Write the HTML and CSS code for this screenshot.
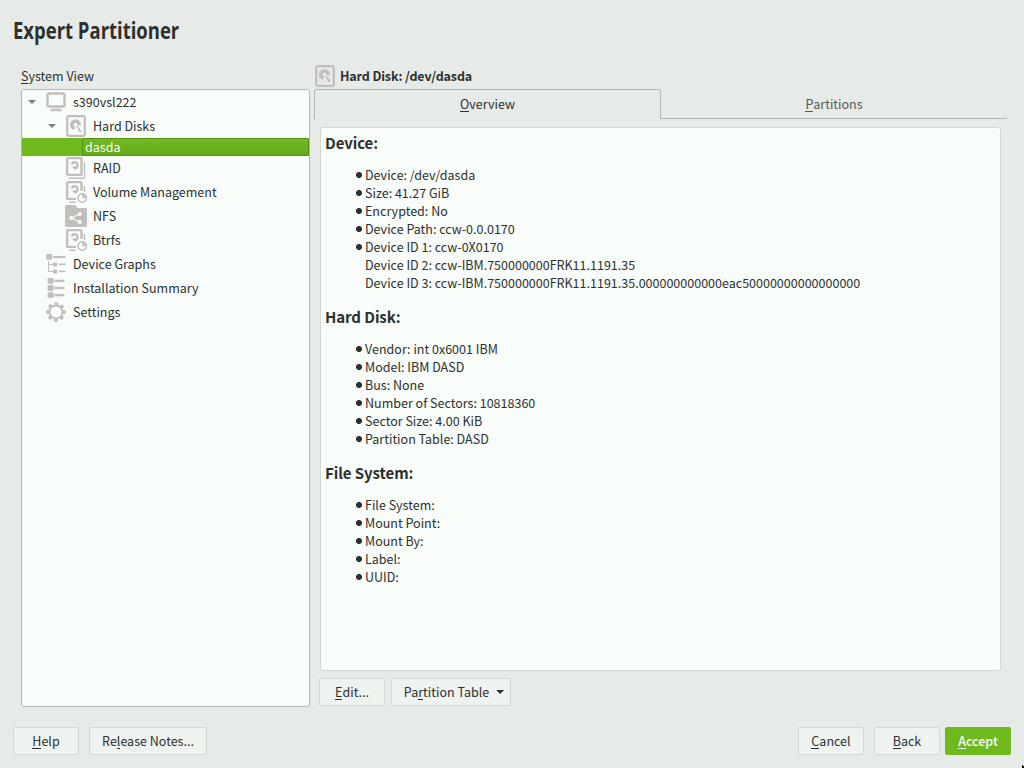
FILE: index.html
```html
<!DOCTYPE html>
<html lang="en">
<head>
<meta charset="utf-8">
<title>Expert Partitioner</title>
<link rel="stylesheet" href="styles.css">
</head>
<body>
<svg class="defs" width="0" height="0">
  <symbol id="disk" viewBox="0 0 22 22">
    <rect x="2.200" y="1.200" width="17.600" height="19.600" rx="1.600" fill="none" stroke="currentColor" stroke-width="2.200"/>
    <path d="M9.700 13.300A3.700 3.700 0 1 1 14.100 10.300" fill="none" stroke="currentColor" stroke-width="3.600"/>
    <path d="M11.500 10.500L13.500 13.200" stroke="currentColor" stroke-width="1.200"/>
    <path d="M13.500 13.500l1.700 2.800" stroke="currentColor" stroke-width="2" stroke-linecap="round"/>
  </symbol>
  <symbol id="stack" viewBox="0 0 22 22">
    <rect x="2.100" y="1.100" width="14.400" height="16.800" rx="1.500" fill="none" stroke="currentColor" stroke-width="2.400"/>
    <path d="M6.600 7.300A3.100 3.100 0 1 1 10.300 11.300L8.300 9.300" fill="none" stroke="currentColor" stroke-width="2.400"/>
  </symbol>
  <symbol id="volume" viewBox="0 0 22 22">
    <path d="M11 17.900H3.600a1.500 1.500 0 0 1-1.500-1.500V2.600a1.500 1.500 0 0 1 1.500-1.500H15a1.500 1.500 0 0 1 1.500 1.500V10" fill="none" stroke="currentColor" stroke-width="2.400"/>
    <path d="M6.600 7.300A3.100 3.100 0 1 1 10.300 11.300L8.300 9.300" fill="none" stroke="currentColor" stroke-width="2.400"/>
    <path d="M19.500 5v6M4 21.300h7" stroke="currentColor" stroke-width="1.400"/>
    <circle cx="17.300" cy="17" r="4.200" fill="none" stroke="currentColor" stroke-width="1.600"/>
    <path d="M17.300 17v-4.200a4.200 4.200 0 0 1 4.200 4.200z" fill="currentColor"/>
  </symbol>
</svg>
<div class="window">
  <h1 class="title"><span class="title-text">Expert Partitioner</span></h1>
  <main class="content">
    <section class="sidebar">
      <div class="caption"><u>S</u>ystem View</div>
      <ul class="tree">
        <li class="row level-0"><i class="arrow"></i><svg class="icon" viewBox="0 0 22 22"><rect x="2.500" y="2.500" width="17" height="13" rx="1.500" fill="none" stroke="currentColor" stroke-width="2.400"/><rect x="5.300" y="17.800" width="11.400" height="2.500" rx="1" fill="currentColor"/></svg><span>s390vsl222</span></li>
        <li class="row level-1"><i class="arrow"></i><svg class="icon"><use href="#disk"/></svg><span>Hard Disks</span></li>
        <li class="row selected"><span class="selection">dasda</span></li>
        <li class="row level-1"><i class="arrow none"></i><svg class="icon" viewBox="0 0 22 22"><use href="#stack"/><path d="M19.500 5v16.300M4 21.300h15.500" fill="none" stroke="currentColor" stroke-width="1.400"/></svg><span>RAID</span></li>
        <li class="row level-1"><i class="arrow none"></i><svg class="icon"><use href="#volume"/></svg><span>Volume Management</span></li>
        <li class="row level-1"><i class="arrow none"></i><svg class="icon" viewBox="0 0 22 22"><path d="M1.500 0H10l2.500 3h8A1.500 1.500 0 0 1 22 4.500v16a1.500 1.500 0 0 1-1.500 1.500h-19A1.500 1.500 0 0 1 0 20.500v-19A1.500 1.500 0 0 1 1.500 0z" fill="currentColor"/><path d="M14.500 9L6.500 13l8 4" fill="none" stroke="#f8fdf9" stroke-width="1.200"/><g fill="#f8fdf9"><circle cx="14.800" cy="9" r="2"/><circle cx="6.300" cy="13" r="2"/><circle cx="14.800" cy="17" r="2"/></g></svg><span>NFS</span></li>
        <li class="row level-1"><i class="arrow none"></i><svg class="icon"><use href="#volume"/></svg><span>Btrfs</span></li>
        <li class="row level-0"><i class="arrow none"></i><svg class="icon" viewBox="0 0 22 22"><g fill="currentColor"><rect x="1.300" y="1" width="5.800" height="5.800" rx="1.200"/><rect x="8" y="2.900" width="12.500" height="2.200"/><rect x="7.800" y="9.500" width="4.400" height="4" rx="1"/><rect x="14" y="10.500" width="6.700" height="1.600"/><rect x="7.800" y="16.500" width="4.400" height="4" rx="1"/><rect x="14" y="17.500" width="6.700" height="1.600"/></g><path d="M3.500 8v10.500H8M3.500 11.500H8" fill="none" stroke="currentColor"/></svg><span>Device Graphs</span></li>
        <li class="row level-0"><i class="arrow none"></i><svg class="icon" viewBox="0 0 22 22"><g fill="currentColor"><rect x="2.600" y="1" width="6" height="5.800" rx="1.200"/><rect x="9.600" y="2.700" width="9.800" height="2.400"/><rect x="2.600" y="8.100" width="6" height="5.800" rx="1.200"/><rect x="9.600" y="9.800" width="9.800" height="2.400"/><rect x="2.600" y="15.200" width="6" height="5.800" rx="1.200"/><rect x="9.600" y="16.900" width="9.800" height="2.400"/></g></svg><span>Installation Summary</span></li>
        <li class="row level-0"><i class="arrow none"></i><svg class="icon" viewBox="0 0 22 22"><circle cx="11" cy="11" r="6.600" fill="none" stroke="currentColor" stroke-width="2"/><circle cx="11" cy="11" r="8.200" fill="none" stroke="currentColor" stroke-width="3.200" stroke-dasharray="3.600 2.840" stroke-dashoffset="1.800"/></svg><span>Settings</span></li>
      </ul>
    </section>
    <section class="details">
      <div class="heading"><svg class="icon"><use href="#disk"/></svg><b>Hard Disk: /dev/dasda</b></div>
      <div class="tabs">
        <div class="tab active"><span><u>O</u>verview</span></div>
        <div class="tab"><span><u>P</u>artitions</span></div>
      </div>
      <article class="info">
        <h3>Device:</h3>
        <ul>
          <li>Device: /dev/dasda</li>
          <li>Size: 41.27 GiB</li>
          <li>Encrypted: No</li>
          <li>Device Path: ccw-0.0.0170</li>
          <li>Device ID 1: ccw-0X0170<br>Device ID 2: ccw-IBM.750000000FRK11.1191.35<br>Device ID 3: ccw-IBM.750000000FRK11.1191.35.000000000000eac50000000000000000</li>
        </ul>
        <h3>Hard Disk:</h3>
        <ul>
          <li>Vendor: int 0x6001 IBM</li>
          <li>Model: IBM DASD</li>
          <li>Bus: None</li>
          <li>Number of Sectors: 10818360</li>
          <li>Sector Size: 4.00 KiB</li>
          <li>Partition Table: DASD</li>
        </ul>
        <h3>File System:</h3>
        <ul>
          <li>File System:</li>
          <li>Mount Point:</li>
          <li>Mount By:</li>
          <li>Label:</li>
          <li>UUID:</li>
        </ul>
      </article>
      <div class="actions">
        <button class="button"><span><u>E</u>dit...</span></button>
        <button class="button menu"><span>Pa<u>r</u>tition Table</span><i class="caret"></i></button>
      </div>
    </section>
  </main>
  <footer class="footer">
    <button class="button"><span><u>H</u>elp</span></button>
    <button class="button notes"><span>Re<u>l</u>ease Notes...</span></button>
    <span class="spacer"></span>
    <button class="button"><span><u>C</u>ancel</span></button>
    <button class="button back"><span><u>B</u>ack</span></button>
    <button class="button primary"><span><u>A</u>ccept</span></button>
  </footer>
  <svg class="pointer" width="2" height="3" viewBox="0 0 2 3"><path d="M0 0h1v1h1v2H0z"/></svg>
</div>
</body>
</html>
```
FILE: styles.css
```css
* { box-sizing: border-box; }
body {
  margin: 0;
  background: #e7ebe8;
  color: #2d302e;
  font: 12.520px/18px "Noto Sans CJK SC", "Noto Sans", sans-serif;
}
ul { list-style: none; margin: 0; padding: 0; }
u { text-decoration: none; box-shadow: 0 1px 0 currentColor; display: inline-block; line-height: 15px; }
.defs, .pointer { position: absolute; }
.pointer { right: 0; bottom: 0; }
.window {
  display: flex;
  flex-direction: column;
  width: 1024px;
  height: 768px;
  overflow: hidden;
  position: relative;
}
.title {
  margin: 0;
  padding: 13px 0 0 13px;
  height: 67px;
  font: bold 24px/34px "Open Sans", sans-serif;
}
.title-text { display: inline-block; transform: scaleX(.770); transform-origin: 0 50%; }
.content { display: flex; height: 640px; padding-left: 21px; }
.sidebar { width: 289px; }
.caption { height: 22px; }
.tree {
  height: 618px;
  border: 1px solid #b3b8b4;
  border-radius: 3px;
  background: #f8fdf9;
}
.row { display: flex; align-items: center; height: 24px; }
.level-1 { padding-left: 20px; }
.arrow {
  width: 8px;
  height: 4px;
  margin: 0 12px 0 6px;
  background: #7c7f7d;
  clip-path: polygon(0 0, 100% 0, 50% 100%);
}
.arrow.none { background: none; }
.icon { width: 22px; height: 22px; margin: 0 6px 0 -3px; color: #c2bebb; flex: none; }
.selected { height: 18px; padding-left: 60px; background: #6fb91f; color: #f8fdf9; }
.selection {
  flex: 1;
  height: 18px;
  padding-left: 2px;
  line-height: 15px;
  border: 1px solid #549213;
  border-radius: 2px;
  background: linear-gradient(#73ba25, #63a91a);
}
.details { width: 693px; margin-left: 4px; }
.heading { display: flex; align-items: center; height: 22px; padding-bottom: 4px; letter-spacing: -.140px; }
.heading .icon { margin: 0 4px 0 0; }
.tabs { display: flex; height: 30px; }
.tab {
  flex: 1;
  display: flex;
  justify-content: center;
  align-items: center;
  border-bottom: 1px solid #b3b8b4;
  color: #555956;
}
.active { flex: 0 0 347px; padding-bottom: 1px; border: 1px solid #b3b8b4; border-bottom: 0; border-radius: 3px 3px 0 0; color: #2d302e; }
.info {
  width: 681px;
  height: 544px;
  margin: 8px 0 0 6px;
  padding: 4px;
  border: 1px solid #d0d9d1;
  border-radius: 3px;
  background: #f8fdf9;
}
.info h3 { margin: 0 0 12px; font-size: 15px; letter-spacing: -.080px; line-height: 22px; }
.info ul { margin-bottom: 14px; padding-left: 30px; }
.info li { white-space: nowrap; padding-left: 10px; background: radial-gradient(circle at 4px 9px, #2d302e 2.700px, transparent 3.300px); }
.actions { display: flex; gap: 6px; padding: 7px 0 0 5px; }
.button {
  display: flex;
  justify-content: center;
  align-items: center;
  width: 66px;
  height: 28px;
  padding: 0;
  border: 1px solid #cfdacf;
  border-radius: 2px;
  background: #eff3f0;
  color: inherit;
  font: inherit;
}
.menu { width: 120px; gap: 7px; padding-left: 6px; }
.caret { width: 8px; height: 4px; background: #2d302e; clip-path: polygon(0 0, 100% 0, 50% 100%); }
.footer { display: flex; padding: 20px 13px 0; }
.notes { width: 118px; margin-left: 10px; }
.spacer { flex: 1; }
.back { margin: 0 5px 0 10px; }
.primary { background: #6fb91f; border-color: #6fb91f; color: #f8fdf9; font-weight: 500; }
```
